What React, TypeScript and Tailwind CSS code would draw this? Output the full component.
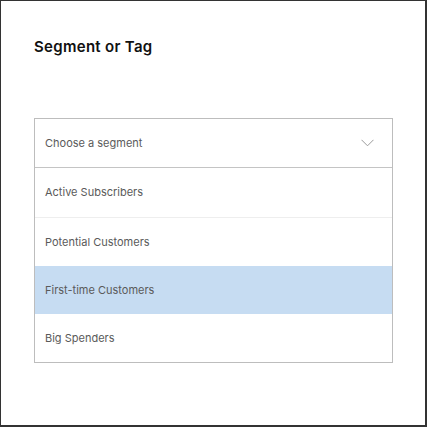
const options = ['Active Subscribers', 'Potential Customers', 'First-time Customers', 'Big Spenders'];

export default function App() {
  const selected = 'First-time Customers';

  return (
    <div
      className="w-[427px] h-[427px] bg-white border-l border-t border-r-2 border-b-2 border-[#333] pl-[33px] pt-[36px]"
      style={{ fontFamily: 'Inter, "Liberation Sans", sans-serif' }}
    >
      <h2 className="text-[15px] leading-5 font-semibold text-[#111] tracking-[0.3px]">Segment or Tag</h2>

      <div className="mt-[61px] w-[359px] border border-[#bdbdbd]">
        {/* select header */}
        <div className="h-[49px] flex items-center justify-between pl-[10px] pr-[18px] border-b border-[#c4c4c4]">
          <span className="text-[11px] text-[#5a5a5a]">Choose a segment</span>
          <svg width="13" height="8" viewBox="0 0 13 8" fill="none">
            <path d="M0.5 0.8 L6.5 6.8 L12.5 0.8" stroke="#9a9a9a" strokeWidth="1" />
          </svg>
        </div>
        {/* options */}
        {options.map((opt, i) => (
          <div
            key={opt}
            className={
              'flex items-center pl-[10px] ' +
              (i === 0 ? 'h-[50px] ' : 'h-[48px] ') +
              (opt === selected ? 'bg-[#c6dcf2] ' : 'bg-white ') +
              (i === 0 ? 'border-b border-[#eeeeee]' : '')
            }
          >
            <span className="text-[11px] text-[#5a5a5a]">{opt}</span>
          </div>
        ))}
      </div>
    </div>
  );
}
